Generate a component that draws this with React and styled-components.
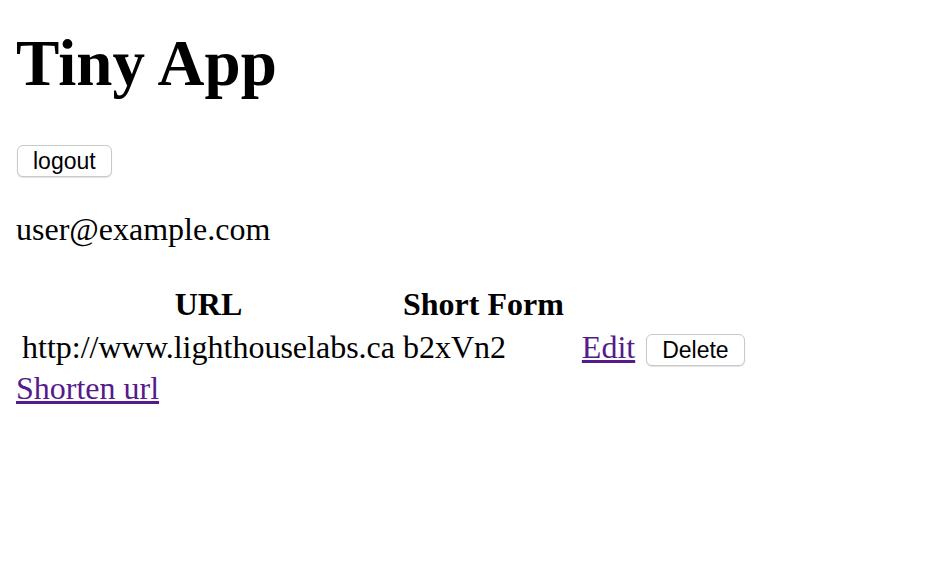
import React from 'react';
import styled, { createGlobalStyle } from 'styled-components';

const GlobalStyle = createGlobalStyle`
  body {
    margin: 0;
    background: #fff;
  }
`;

const Page = styled.div`
  padding: 0 16px;
  font-family: "Liberation Serif", "Times New Roman", serif;
  font-size: 32px;
  color: #000;
`;

const Title = styled.h1`
  margin: 27px 0 0;
  font-size: 65px;
  line-height: 72px;
  font-weight: bold;
`;

const Toolbar = styled.div`
  margin-top: 46px;
  display: flex;
`;

const Button = styled.button`
  height: 32px;
  margin-left: ${props => props.offset || 0}px;
  padding: 0 15px;
  font-family: "Liberation Sans", Arial, sans-serif;
  font-size: 23px;
  line-height: 30px;
  color: #000;
  background: #fff;
  border: 1px solid #c9c9c9;
  border-radius: 6px;
  box-shadow: 0 1px 1px rgba(0, 0, 0, 0.12);
  vertical-align: baseline;
  cursor: pointer;
`;

const Email = styled.div`
  margin-top: 34px;
  line-height: 36px;
`;

const UrlTable = styled.table`
  margin-top: 34px;
  border-spacing: 4px;
  line-height: 35px;
`;

const HeadCell = styled.th`
  padding: 2px;
  font-weight: bold;
  text-align: center;
`;

const Cell = styled.td`
  padding: 2px;
  padding-left: ${props => props.indent || 2}px;
  vertical-align: baseline;
  white-space: nowrap;
`;

const Link = styled.a`
  color: #551a8b;
  text-decoration: underline;
`;

const Footer = styled.div`
  line-height: 32px;
`;

const urls = [
  { short: 'b2xVn2', long: 'http://www.lighthouselabs.ca' }
];

const App = () => (
  <Page>
    <GlobalStyle />
    <Title>Tiny App</Title>
    <Toolbar>
      <Button offset={1}>logout</Button>
    </Toolbar>
    <Email>user@example.com</Email>
    <UrlTable>
      <thead>
        <tr>
          <HeadCell>URL</HeadCell>
          <HeadCell>Short Form</HeadCell>
        </tr>
      </thead>
      <tbody>
        {urls.map(url => (
          <tr key={url.short}>
            <Cell>{url.long}</Cell>
            <Cell>{url.short}</Cell>
            <Cell indent={12}>
              <Link href={`/urls/${url.short}`}>Edit</Link>
            </Cell>
            <Cell>
              <Button offset={3}>Delete</Button>
            </Cell>
          </tr>
        ))}
      </tbody>
    </UrlTable>
    <Footer>
      <Link href="/urls/new">Shorten url</Link>
    </Footer>
  </Page>
);

export default App;
